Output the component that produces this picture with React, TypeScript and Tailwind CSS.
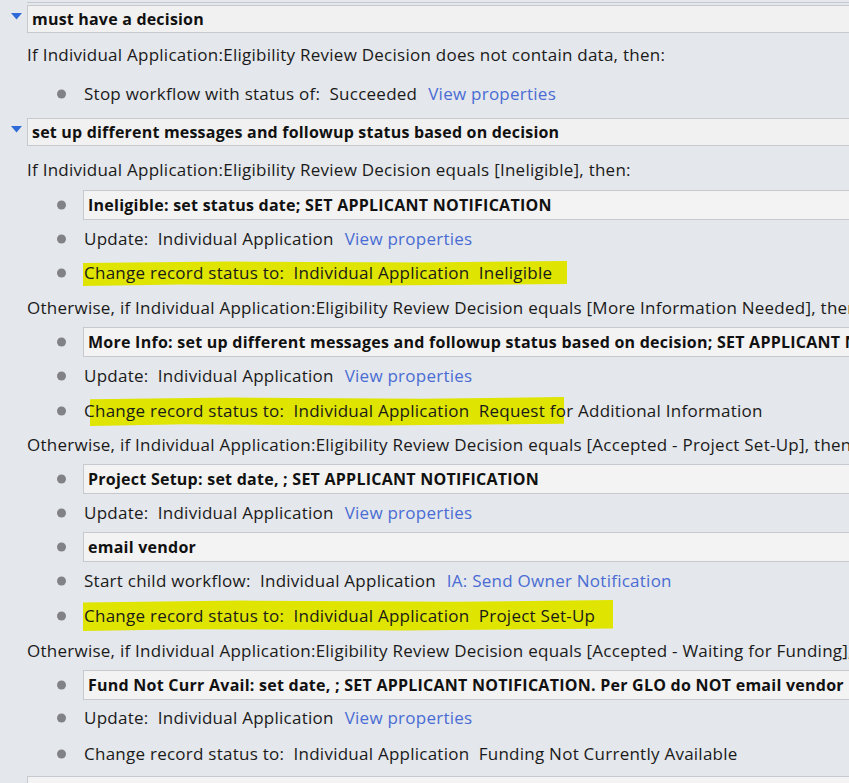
import React from "react";

const font = { fontFamily: '"Open Sans", "Noto Sans", sans-serif' };

function Triangle() {
  return (
    <svg width="11" height="7" viewBox="0 0 11 7" className="absolute left-[11px] top-1/2 -translate-y-[6px]">
      <path d="M0 0 H11 L5.5 6.5 Z" fill="#2f6bd8" />
    </svg>
  );
}

function Header({ title, h }: { title: string; h: string }) {
  return (
    <div className={`relative flex items-center ${h}`}>
      <Triangle />
      <div className="ml-[27px] flex h-[28px] flex-1 items-center overflow-hidden whitespace-nowrap border border-r-0 border-[#c6c9cd] bg-[#f1f1f1] pl-[4px] text-[16px] font-bold tracking-[0.2px] text-[#111]">
        {title}
      </div>
    </div>
  );
}

function Line({ children, h }: { children: React.ReactNode; h: string }) {
  return <div className={`flex items-center pl-[27px] ${h}`}>{children}</div>;
}

function Bullet() {
  return <span className="absolute left-[57px] top-1/2 h-[9px] w-[9px] -translate-y-1/2 rounded-full bg-[#808285]" />;
}

function BulletRow({ children, h, mark }: { children: React.ReactNode; h: string; mark?: string }) {
  return (
    <div className={`relative flex items-center pl-[84px] ${h}`}>
      <Bullet />
      {mark && <span className={`absolute ${mark} bg-[#dfe500] [clip-path:polygon(0%_8%,30%_2%,70%_6%,100%_0%,100%_92%,60%_98%,20%_94%,0%_100%)]`} />}
      <span className="relative whitespace-pre">{children}</span>
    </div>
  );
}

function BoxRow({ title, h }: { title: string; h: string }) {
  return (
    <div className={`relative flex items-center ${h}`}>
      <Bullet />
      <div className="ml-[83px] flex h-[30px] flex-1 items-center overflow-hidden whitespace-nowrap border border-r-0 border-[#c6c9cd] bg-[#f3f3f3] pl-[4px] text-[16px] font-bold tracking-[0.25px] text-[#111]">
        {title}
      </div>
    </div>
  );
}

function Link({ children }: { children: React.ReactNode }) {
  return <span className="ml-[11px] text-[#4a6cd4]">{children}</span>;
}

export default function App() {
  return (
    <div style={font} className="h-[783px] w-[849px] overflow-hidden bg-[#e4e7eb] text-[17px] tracking-[0.25px] text-[#1a1a1a]">
      <div className="h-[3px] border-b border-[#c6c9cd] ml-[27px]" />
      <Header title="must have a decision" h="h-[32px]" />
      <Line h="h-[40px]">If Individual Application:Eligibility Review Decision does not contain data, then:</Line>
      <BulletRow h="h-[38px]">
        Stop workflow with status of:  Succeeded<Link>View properties</Link>
      </BulletRow>
      <Header title="set up different messages and followup status based on decision" h="h-[38px]" />
      <Line h="h-[37px]">If Individual Application:Eligibility Review Decision equals [Ineligible], then:</Line>
      <BoxRow title="Ineligible: set status date; SET APPLICANT NOTIFICATION" h="h-[34px]" />
      <BulletRow h="h-[34px]">
        Update:  Individual Application<Link>View properties</Link>
      </BulletRow>
      <BulletRow h="h-[34px]" mark="left-[83px] w-[484px] top-[5px] bottom-[4px]">
        Change record status to:  Individual Application  Ineligible
      </BulletRow>
      <Line h="h-[35px]">
        <span className="whitespace-nowrap">
          Otherwise, if Individual Application:Eligibility Review Decision equals [More Information Needed], then:
        </span>
      </Line>
      <BoxRow title="More Info: set up different messages and followup status based on decision; SET APPLICANT NOTIFICATION" h="h-[34px]" />
      <BulletRow h="h-[34px]">
        Update:  Individual Application<Link>View properties</Link>
      </BulletRow>
      <BulletRow h="h-[35px]" mark="left-[90px] w-[474px] top-[4px] bottom-[2px]">
        Change record status to:  Individual Application  Request for Additional Information
      </BulletRow>
      <Line h="h-[34px]">
        <span className="whitespace-nowrap">
          Otherwise, if Individual Application:Eligibility Review Decision equals [Accepted - Project Set-Up], then:
        </span>
      </Line>
      <BoxRow title="Project Setup: set date, ; SET APPLICANT NOTIFICATION" h="h-[34px]" />
      <BulletRow h="h-[34px]">
        Update:  Individual Application<Link>View properties</Link>
      </BulletRow>
      <BoxRow title="email vendor" h="h-[34px]" />
      <BulletRow h="h-[34px]">
        Start child workflow:  Individual Application<Link>IA: Send Owner Notification</Link>
      </BulletRow>
      <BulletRow h="h-[35px]" mark="left-[83px] w-[530px] top-[2px] bottom-[2px]">
        Change record status to:  Individual Application  Project Set-Up
      </BulletRow>
      <Line h="h-[35px]">
        <span className="whitespace-nowrap">
          Otherwise, if Individual Application:Eligibility Review Decision equals [Accepted - Waiting for Funding], then:
        </span>
      </Line>
      <BoxRow title="Fund Not Curr Avail: set date, ; SET APPLICANT NOTIFICATION. Per GLO do NOT email vendor" h="h-[33px]" />
      <BulletRow h="h-[34px]">
        Update:  Individual Application<Link>View properties</Link>
      </BulletRow>
      <BulletRow h="h-[38px]">
        Change record status to:  Individual Application  Funding Not Currently Available
      </BulletRow>
      <div className="ml-[27px] mt-[3px] h-[30px] border border-r-0 border-[#c6c9cd] bg-[#f3f3f3]" />
    </div>
  );
}
